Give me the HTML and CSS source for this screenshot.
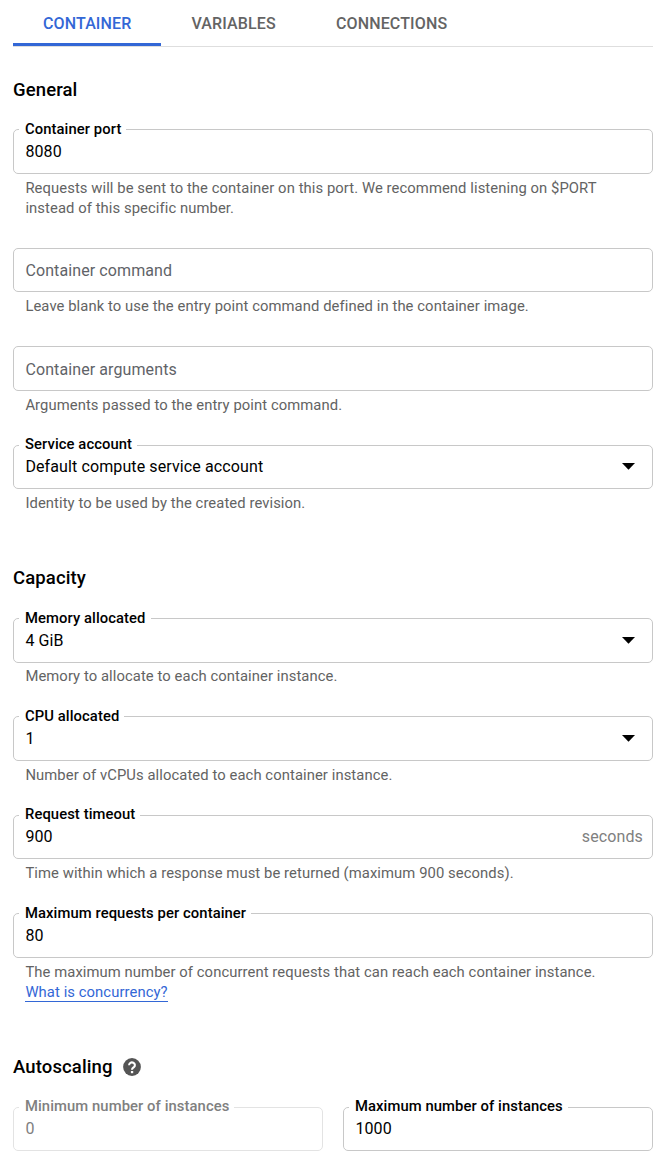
FILE: index.html
```html
<!DOCTYPE html>
<html lang="en">
<head>
<meta charset="utf-8">
<title>Container settings</title>
<link rel="stylesheet" href="styles.css">
</head>
<body>
<main class="panel">
  <nav class="tabs">
    <a class="tab tab-active">CONTAINER</a>
    <a class="tab tab-variables">VARIABLES</a>
    <a class="tab tab-connections">CONNECTIONS</a>
  </nav>

  <section class="general">
    <h2 class="heading">General</h2>
    <div class="field">
      <fieldset class="box"><legend class="label">Container port</legend><div class="value">8080</div></fieldset>
      <p class="hint">Requests will be sent to the container on this port. We recommend listening on $PORT<br>instead of this specific number.</p>
    </div>
    <div class="field field-command">
      <div class="box box-empty box-short">Container command</div>
      <p class="hint">Leave blank to use the entry point command defined in the container image.</p>
    </div>
    <div class="field field-arguments">
      <div class="box box-empty">Container arguments</div>
      <p class="hint">Arguments passed to the entry point command.</p>
    </div>
    <div class="field field-account">
      <fieldset class="box box-short"><legend class="label">Service account</legend><div class="value">Default compute service account<svg class="arrow" viewBox="0 0 13 7"><path d="M0 0h13L6.500 6.700z"/></svg></div></fieldset>
      <p class="hint">Identity to be used by the created revision.</p>
    </div>
  </section>

  <section class="capacity">
    <h2 class="heading">Capacity</h2>
    <div class="field">
      <fieldset class="box"><legend class="label">Memory allocated</legend><div class="value">4 GiB<svg class="arrow" viewBox="0 0 13 7"><path d="M0 0h13L6.500 6.700z"/></svg></div></fieldset>
      <p class="hint hint-memory">Memory to allocate to each container instance.</p>
    </div>
    <div class="field field-cpu">
      <fieldset class="box"><legend class="label">CPU allocated</legend><div class="value">1<svg class="arrow" viewBox="0 0 13 7"><path d="M0 0h13L6.500 6.700z"/></svg></div></fieldset>
      <p class="hint">Number of vCPUs allocated to each container instance.</p>
    </div>
    <div class="field field-timeout">
      <fieldset class="box box-short"><legend class="label">Request timeout</legend><div class="value">900<span class="unit">seconds</span></div></fieldset>
      <p class="hint">Time within which a response must be returned (maximum 900 seconds).</p>
    </div>
    <div class="field field-requests">
      <fieldset class="box"><legend class="label">Maximum requests per container</legend><div class="value">80</div></fieldset>
      <p class="hint">The maximum number of concurrent requests that can reach each container instance.<br><a class="link">What is concurrency?</a></p>
    </div>
  </section>

  <section class="autoscaling">
    <h2 class="heading">Autoscaling
      <svg class="help" viewBox="0 0 18 18"><circle class="help-disc" cx="9" cy="9" r="8.900"/><path class="help-mark" d="M6.100 7.200a2.900 2.700 0 1 1 4.600 2.100C9.700 10 9 10.400 9 11.700"/><rect class="help-dot" x="7.900" y="13" width="2.300" height="2.200"/></svg>
    </h2>
    <div class="pair">
      <fieldset class="box box-short box-disabled" disabled><legend class="label">Minimum number of instances</legend><div class="value">0</div></fieldset>
      <fieldset class="box box-short"><legend class="label">Maximum number of instances</legend><div class="value">1000</div></fieldset>
    </div>
  </section>
</main>
</body>
</html>
```
FILE: styles.css
```css
* { box-sizing: border-box; }
body {
  margin: 0;
  background: #fff;
  color: #000;
  font: 16px/24px Roboto, "Liberation Sans", sans-serif;
  overflow: hidden;
}
.panel { padding: 0 13px; }
.tabs {
  display: flex;
  height: 47px;
  border-bottom: 1px solid #dedede;
  color: #646464;
  font-weight: 500;
  line-height: 48px;
}
.tab { height: 46px; padding: 0 30px; letter-spacing: 0.13px; }
.tab-active { color: #3367d6; border-bottom: 3px solid #3367d6; width: 148px; }
.tab-variables { width: 145px; padding-left: 30.4px; }
.heading {
  display: flex;
  align-items: center;
  gap: 10.5px;
  margin: 0;
  font-size: 18.5px;
  font-weight: 500;
  letter-spacing: 0.12px;
  line-height: 24px;
}
.general { padding-top: 31px; }
.capacity { padding-top: 53px; }
.autoscaling { padding-top: 53px; }
.general .heading + .field { margin-top: 18px; }
.capacity .heading + .field { margin-top: 19px; }
.field-command, .field-arguments { margin-top: 30px; }
.field-account, .field-timeout { margin-top: 20px; }
.field-cpu, .field-requests { margin-top: 21px; }

/* The legend straddles the top border, which runs 9px below the fieldset's top. */
.box {
  display: block;
  min-width: 0;
  height: 54px;
  margin: 0;
  padding: 0 9px 0 5px;
  border: 1px solid #c8c8c8;
  border-radius: 5px;
}
.label {
  padding: 0 5px 0 6px;
  font-size: 14.8px;
  font-weight: 500;
  letter-spacing: 0.08px;
  line-height: 19px;
}
.box-short .label { padding-bottom: 2px; }
.value {
  display: flex;
  justify-content: space-between;
  padding-left: 6.4px;
  letter-spacing: 0.11px;
  line-height: 25px;
}
.box-short .value { margin-top: -2px; }
.box-empty {
  height: 45px;
  padding-left: 11.4px;
  color: #5f6368;
  letter-spacing: 0.1px;
  line-height: 45px;
}
.box-empty.box-short { height: 44px; line-height: 43px; }
.arrow { align-self: center; width: 13px; height: 7px; margin-right: 8px; }
.unit { color: #808080; }
.hint {
  margin: 4px 0 0;
  padding-left: 12.4px;
  color: #636363;
  font-size: 14.8px;
  letter-spacing: 0.08px;
  line-height: 20px;
  white-space: nowrap;
}
.hint-memory { margin-top: 3px; }
.link { display: inline-block; height: 20px; border-bottom: 1px solid #3367d6; color: #3367d6; }
.help { width: 18px; height: 18px; }
.help-disc { fill: #555; }
.help-mark { fill: none; stroke: #fff; stroke-width: 2.1; }
.help-dot { fill: #fff; }
.pair { display: grid; grid-template-columns: 310px 310px; gap: 20px; margin-top: 18px; }
.box-disabled { border-color: #e3e3e3; color: #808080; }
```
